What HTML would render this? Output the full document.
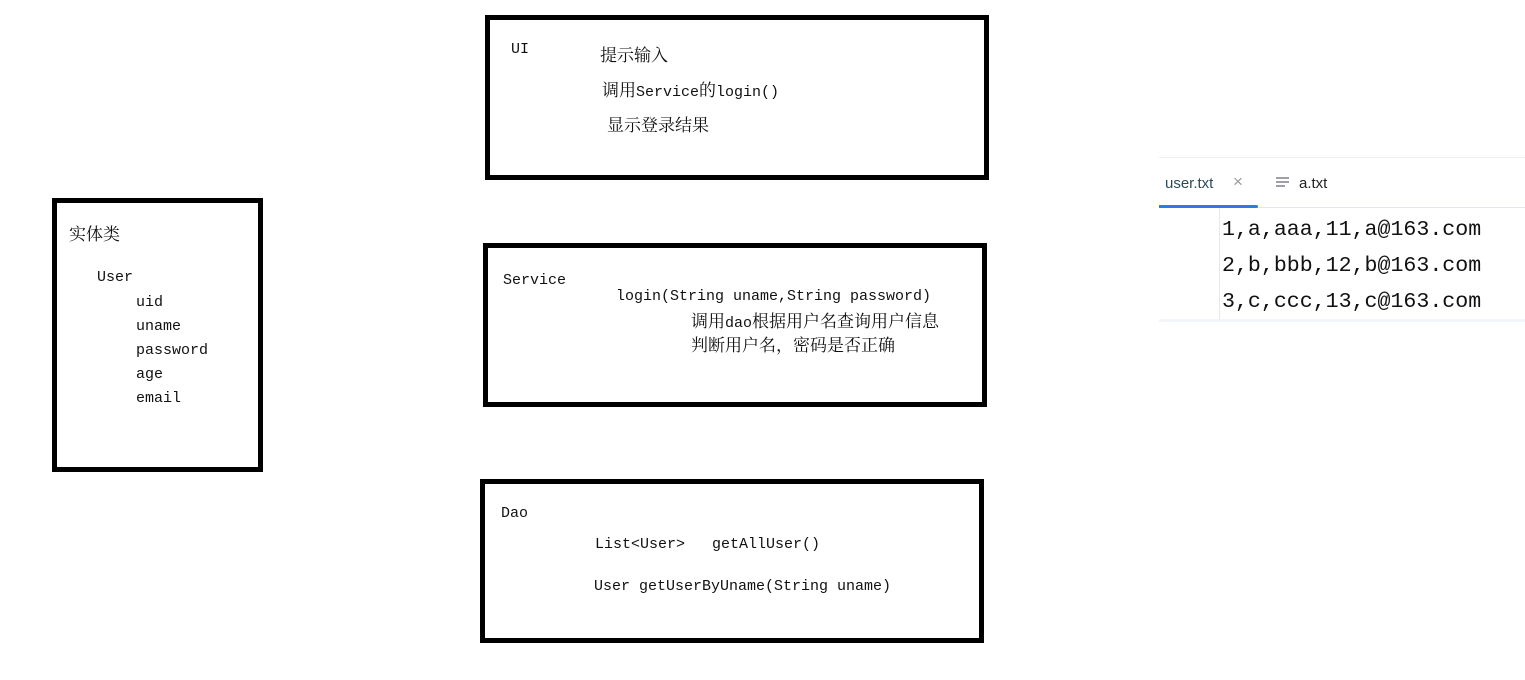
<!DOCTYPE html>
<html><head><meta charset="utf-8"><style>
body{margin:0;width:1525px;height:680px;background:#fff;position:relative;overflow:hidden;font-family:"Liberation Mono","Noto Serif CJK SC",monospace;font-size:15px;color:#111}
.b{position:absolute;border:5px solid #000;box-sizing:border-box}
.t{position:absolute;white-space:pre;line-height:18px}
.c{font-family:"Noto Serif CJK SC","Liberation Mono",serif;font-size:17px}
.code{position:absolute;left:1222px;font-family:"Liberation Mono",monospace;font-size:21.6px;color:#111;line-height:24px;white-space:pre}
</style></head><body>
<div class="b" style="left:485px;top:15px;width:504px;height:165px"></div>
<div class="t" style="left:511px;top:41px">UI</div>
<div class="t c" style="left:600px;top:45px">提示输入</div>
<div class="t" style="left:602px;top:80px"><span class="c">调用</span>Service<span class="c">的</span>login()</div>
<div class="t c" style="left:607px;top:115px">显示登录结果</div>

<div class="b" style="left:483px;top:243px;width:504px;height:164px"></div>
<div class="t" style="left:503px;top:272px">Service</div>
<div class="t" style="left:616px;top:288px">login(String uname,String password)</div>
<div class="t c" style="left:691px;top:311px">调用<span style="font-family:'Liberation Mono';font-size:15px">dao</span>根据用户名查询用户信息</div>
<div class="t c" style="left:691px;top:335px">判断用户名，密码是否正确</div>

<div class="b" style="left:480px;top:479px;width:504px;height:164px"></div>
<div class="t" style="left:501px;top:505px">Dao</div>
<div class="t" style="left:595px;top:536px">List&lt;User&gt;   getAllUser()</div>
<div class="t" style="left:594px;top:578px">User getUserByUname(String uname)</div>

<div class="b" style="left:52px;top:198px;width:211px;height:274px"></div>
<div class="t c" style="left:69px;top:224px">实体类</div>
<div class="t" style="left:97px;top:269px">User</div>
<div class="t" style="left:136px;top:294px">uid</div>
<div class="t" style="left:136px;top:318px">uname</div>
<div class="t" style="left:136px;top:342px">password</div>
<div class="t" style="left:136px;top:366px">age</div>
<div class="t" style="left:136px;top:390px">email</div>

<div style="position:absolute;left:1159px;top:157px;width:366px;height:1px;background:#eceef2"></div>
<div style="position:absolute;left:1165px;top:175px;font-family:'Liberation Sans',sans-serif;font-size:15px;color:#2a4a5a">user.txt</div>
<div style="position:absolute;left:1233px;top:172px;font-family:'Liberation Sans',sans-serif;font-size:17px;color:#999">×</div>
<svg style="position:absolute;left:1275px;top:176px" width="16" height="14"><path d="M1 2h13M1 6h13M1 10h9" stroke="#667" stroke-width="1.3"/></svg>
<div style="position:absolute;left:1299px;top:175px;font-family:'Liberation Sans',sans-serif;font-size:15px;color:#222">a.txt</div>
<div style="position:absolute;left:1159px;top:207px;width:366px;height:1px;background:#e3e6ea"></div>
<div style="position:absolute;left:1159px;top:205px;width:99px;height:3px;background:#2f7ae5;border-radius:0 2px 2px 0"></div>
<div style="position:absolute;left:1219px;top:208px;width:1px;height:112px;background:#e6e8ea"></div>
<div style="position:absolute;left:1159px;top:319px;width:366px;height:3px;background:#f2f5f9"></div>
<div class="code" style="top:218px">1,a,aaa,11,a@163.com</div>
<div class="code" style="top:254px">2,b,bbb,12,b@163.com</div>
<div class="code" style="top:290px">3,c,ccc,13,c@163.com</div>
</body></html>
